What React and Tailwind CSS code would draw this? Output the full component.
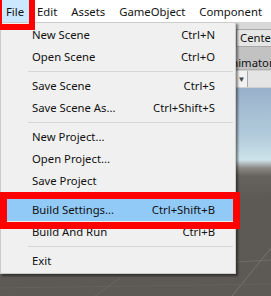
import React from 'react';

const menuBar = ['File', 'Edit', 'Assets', 'GameObject', 'Component'];

const groups = [
    [['New Scene', 'Ctrl+N'], ['Open Scene', 'Ctrl+O']],
    [['Save Scene', 'Ctrl+S'], ['Save Scene As...', 'Ctrl+Shift+S']],
    [['New Project...', ''], ['Open Project...', ''], ['Save Project', '']],
    [['Build Settings...', 'Ctrl+Shift+B', true], ['Build And Run', 'Ctrl+B']],
    [['Exit', '']],
];

const App = () => {
    return (
        <div
            className="relative w-[271px] h-[296px] overflow-hidden text-[11.3px] text-[#111] bg-[#5d5955]"
            style={{ fontFamily: '"Noto Sans", "Liberation Sans", sans-serif' }}
        >
            {/* Top menu bar */}
            <div className="h-[22px] bg-white flex items-center">
                {menuBar.map((name, i) => (
                    <div
                        key={name}
                        className={`h-[22px] pt-[3px] flex items-center ${i === 0 ? 'px-[6px] bg-[#cce8ff]' : 'px-[7px]'}`}
                    >
                        {name}
                    </div>
                ))}
            </div>

            {/* Editor behind the menu */}
            <div className="flex flex-col h-[274px]">
                <div className="h-[25px] bg-[#d8d8d8] flex items-end">
                    <div className="ml-[236px] h-[18px] px-[3px] bg-[#e6e6e6] border border-[#a8a8a8] flex items-center leading-none">Center</div>
                </div>
                <div className="h-[22px] bg-[#c2c2c2] flex items-end">
                    <div className="ml-[222px] h-[12px] px-[2px] flex items-center leading-none">Animator</div>
                </div>
                <div className="h-[19px] bg-[#cfcfcf] border-t border-[#b0b0b0] flex items-center">
                    <div className="ml-[236px] w-[12px] h-[16px] bg-[#f2f2f2] border-r border-[#a8a8a8] flex items-center justify-center text-[8px] text-[#444]">▼</div>
                    <div className="flex-1 h-[16px] bg-[#e4e4e4]" />
                </div>
                <div className="flex-1 relative bg-[linear-gradient(to_bottom,#98b1ca_0px,#b4cddc_50px,#cde3ea_72px,#8c8883_80px,#66625e_88px,#5d5955_110px)]">
                    <svg className="absolute inset-0 w-full h-full" viewBox="0 0 271 208" preserveAspectRatio="none">
                        <line x1="271" y1="160" x2="232" y2="208" stroke="#77736f" strokeWidth="1" />
                        <line x1="236" y1="174" x2="271" y2="172" stroke="#716d69" strokeWidth="1" />
                        <line x1="120" y1="190" x2="95" y2="208" stroke="#6b6763" strokeWidth="1" />
                        <line x1="0" y1="200" x2="271" y2="196" stroke="#65615d" strokeWidth="1" />
                    </svg>
                </div>
            </div>

            {/* File dropdown */}
            <div className="absolute left-0 top-[22px] w-[236px] bg-[#f0f0f0] border border-[#cccccc] py-px shadow-[2px_2px_2px_rgba(0,0,0,0.45)]">
                {groups.map((group, gi) => (
                    <React.Fragment key={gi}>
                        {gi > 0 && (
                            <div className="h-[7px] flex items-center">
                                <div className="ml-[27px] mr-[2px] flex-1 h-px bg-[#d7d7d7]" />
                            </div>
                        )}
                        {group.map(([label, shortcut, active]) => (
                            <div
                                key={label}
                                className={`mx-[1px] h-[22px] pl-[30px] pr-[19px] flex items-center justify-between ${active ? 'bg-[#91c9f7]' : ''}`}
                            >
                                <span>{label}</span>
                                <span>{shortcut}</span>
                            </div>
                        ))}
                    </React.Fragment>
                ))}
            </div>

            {/* Red annotation boxes */}
            <div className="absolute -left-[4px] -top-[8px] w-[39px] h-[38px] border-[6px] border-[#ff0000]" />
            <div className="absolute left-0 top-[192px] w-[240px] h-[37px] border-[7px] border-[#ff0000]" />
        </div>
    );
};

export default App;
